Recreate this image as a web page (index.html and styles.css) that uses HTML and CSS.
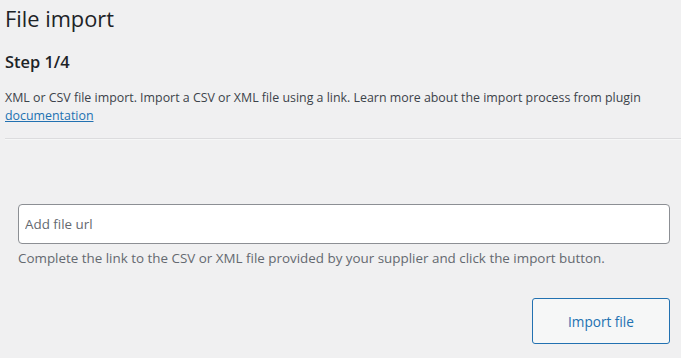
FILE: index.html
```html
<!DOCTYPE html>
<html>
<head>
<meta charset="utf-8">
<link rel="stylesheet" href="styles.css">
</head>
<body>
<div class="wrap">
  <h1 class="title">File import</h1>
  <h2 class="step">Step 1/4</h2>
  <p class="intro">XML or CSV file import. Import a CSV or XML file using a link. Learn more about the import process from plugin <a href="#">documentation</a></p>
  <hr class="sep">
  <div class="form">
    <input class="url" type="text" placeholder="Add file url">
    <p class="desc">Complete the link to the CSV or XML file provided by your supplier and click the import button.</p>
    <div class="actions">
      <button class="btn">Import file</button>
    </div>
  </div>
</div>
</body>
</html>
```

FILE: styles.css
```css
html, body {
  margin: 0;
  padding: 0;
  background: #f0f0f1;
  height: 100%;
}
body {
  font-family: "Open Sans", "Noto Sans", sans-serif;
  font-size: 12.4px;
  color: #3c434a;
  line-height: 18px;
}
.wrap {
  padding: 0 0 0 5px;
}
.title {
  margin: 0;
  padding: 4px 0 0;
  font-size: 21.8px;
  font-weight: 400;
  line-height: 30px;
  color: #1d2327;
}
.step {
  margin: 18px 0 0;
  font-size: 16.4px;
  font-weight: 600;
  line-height: 20px;
  color: #1d2327;
}
.intro {
  margin: 17px 0 0;
  color: #3c434a;
}
.intro a {
  color: #2271b1;
  text-decoration: underline;
}
.sep {
  margin: 13px 0 0;
  border: 0;
  border-top: 1px solid #dcdcde;
  border-bottom: 1px solid #f6f7f7;
  height: 0;
}
.form {
  padding: 64px 11px 0 13px;
  display: flex;
  flex-direction: column;
}
.url {
  box-sizing: border-box;
  width: 100%;
  height: 40px;
  margin: 0;
  border: 1px solid #8c8f94;
  border-radius: 4px;
  background: #fff;
  padding: 0 6px;
  font-family: inherit;
  font-size: 13.4px;
  color: #2c3338;
}
.url::placeholder {
  color: #646970;
}
.desc {
  margin: 4px 0 0;
  color: #646970;
  font-size: 13.4px;
  line-height: 20px;
}
.actions {
  display: flex;
  justify-content: flex-end;
  margin-top: 30px;
}
.btn {
  width: 138px;
  height: 46px;
  box-sizing: border-box;
  border: 1px solid #2271b1;
  border-radius: 3px;
  background: #f6f7f7;
  color: #2271b1;
  font-family: inherit;
  font-size: 13.6px;
  cursor: pointer;
}
```
